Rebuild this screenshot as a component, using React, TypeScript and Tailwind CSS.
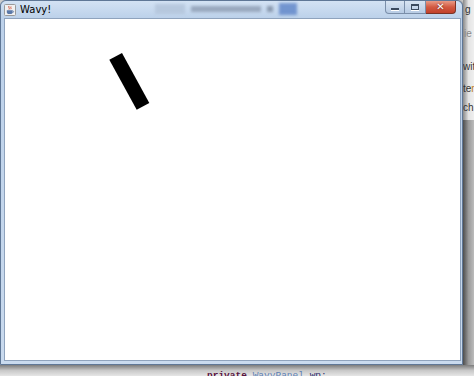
import React from "react";

function JavaIcon() {
  return (
    <svg width="12" height="12" viewBox="0 0 12 12">
      <rect x="0.5" y="0.5" width="11" height="11" rx="1" fill="#f1f1f1" stroke="#9a9a9a" />
      <path d="M5 2 C4 3.5 6 4 5 5.5 M7 2.5 C6.2 3.6 7.6 4 6.8 5.2" stroke="#d0452b" strokeWidth="0.9" fill="none" />
      <path d="M2.8 6.3 H8.6 V8.2 C8.6 9.4 7.6 10 6.6 10 H4.8 C3.8 10 2.8 9.4 2.8 8.2 Z" fill="#5a78a8" />
      <path d="M8.6 6.8 C10 6.8 10 8.6 8.4 8.6" stroke="#5a78a8" strokeWidth="0.8" fill="none" />
    </svg>
  );
}

function CaptionButtons() {
  return (
    <div className="flex h-[13px] mr-[6px] ml-auto">
      <div className="w-[20px] h-full border border-t-0 border-[#7a8ea9] rounded-bl-[4px] bg-gradient-to-b from-[#d8e4f2] to-[#b7cbe4] flex items-end justify-center pb-[3px]">
        <div className="w-[8px] h-[2px] bg-[#3b4a5e] shadow-[0_1px_0_#fff]" />
      </div>
      <div className="w-[21px] h-full border border-t-0 border-l-0 border-[#7a8ea9] bg-gradient-to-b from-[#d8e4f2] to-[#b7cbe4] flex items-center justify-center">
        <div className="w-[8px] h-[6px] border border-t-2 border-[#3b4a5e] shadow-[0_1px_0_#fff]" />
      </div>
      <div className="w-[30px] h-full border border-t-0 border-l-0 border-[#7a3326] rounded-br-[4px] bg-gradient-to-b from-[#e99a86] via-[#d25a42] to-[#c2402a] flex items-center justify-center">
        <span className="text-white text-[10px] leading-none font-bold font-['DejaVu_Sans',sans-serif] [text-shadow:0_0_2px_#5a1a10]">
          ✕
        </span>
      </div>
    </div>
  );
}

function TitleBar() {
  return (
    <div className="h-[19px] flex items-start bg-gradient-to-b from-[#d3e2f3] to-[#bcd1ea] rounded-t-[6px]">
      <div className="mt-[3px] ml-[3px]">
        <JavaIcon />
      </div>
      <span className="mt-[3px] ml-[4px] text-[10px] leading-[12px] text-black font-['DejaVu_Sans',sans-serif]">
        Wavy!
      </span>
      <div className="ml-[104px] mt-[2px] flex items-center gap-[6px] blur-[1.5px] opacity-80">
        <div className="w-[30px] h-[10px] bg-[#b3c4da]" />
        <div className="w-[70px] h-[6px] bg-[#8d9cb2]" />
        <div className="w-[6px] h-[6px] bg-[#7c8aa0]" />
        <div className="w-[18px] h-[12px] bg-[#5d84c8]" />
      </div>
      <CaptionButtons />
    </div>
  );
}

function Client() {
  return (
    <div className="flex-1 bg-white border border-[#8fa3bd] relative">
      <svg width="455" height="341" className="block">
        <polygon points="104.3,40.7 117,34 144.3,84 131.7,90.7" fill="#000" />
      </svg>
    </div>
  );
}

function Window() {
  return (
    <div className="w-[463px] h-full flex flex-col bg-[#bcd1ea] border border-[#5f7796] rounded-t-[6px] shadow-[1px_1px_3px_rgba(0,0,0,0.5)]">
      <TitleBar />
      <div className="flex-1 flex px-[3px] pb-[3px] bg-gradient-to-b from-[#bcd1ea] to-[#c9daee]">
        <Client />
      </div>
    </div>
  );
}

function RightStrip() {
  return (
    <div className="flex-1 flex flex-col overflow-hidden">
      <div className="h-[120px] bg-gradient-to-r from-[#8a8a8a] via-[#e4e4e4] to-[#efefef] text-[10px] leading-none text-[#333] font-['Liberation_Sans',sans-serif] whitespace-nowrap">
        <div className="mt-[5px] ml-[2px]">g</div>
        <div className="mt-[14px] ml-[1px] text-[#888]">ie</div>
        <div className="mt-[23px]">wit</div>
        <div className="mt-[12px]">
          te<span className="text-[#c07a20]">r</span>
        </div>
        <div className="mt-[9px]">ch</div>
      </div>
      <div className="flex-1 bg-gradient-to-r from-[#4e4e4e] via-[#9a9a9a] to-[#bcbcbc]" />
    </div>
  );
}

function BottomStrip() {
  return (
    <div className="flex-1 overflow-hidden bg-gradient-to-b from-[#7d7d7d] via-[#c8c8c8] to-[#e6e6e6]">
      <div className="pt-[6px] pl-[207px] text-[9.5px] leading-[10px] font-['Liberation_Mono',monospace] whitespace-nowrap">
        <span className="text-[#5a1440] font-bold">private</span>{" "}
        <span className="text-[#5d7fb4]">WavyPanel</span>{" "}
        <span className="text-[#2a2a6a]">wp;</span>
      </div>
    </div>
  );
}

export default function App() {
  return (
    <div className="w-[474px] h-[376px] overflow-hidden flex flex-col bg-[#d0d0d0]">
      <div className="h-[365px] flex">
        <Window />
        <RightStrip />
      </div>
      <BottomStrip />
    </div>
  );
}
